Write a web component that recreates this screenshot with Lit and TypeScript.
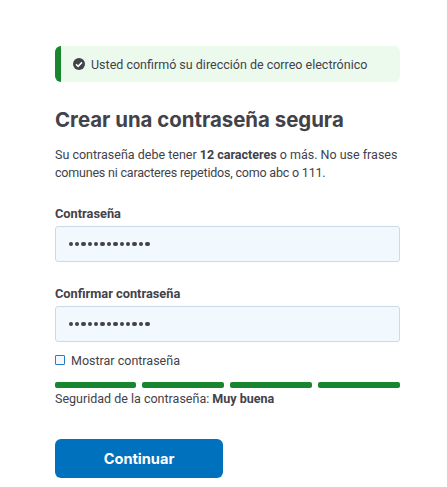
import { LitElement, html, css } from "lit";
import { customElement } from "lit/decorators.js";

@customElement("app-root")
export class AppRoot extends LitElement {
  static styles = css`
    :host { display: block; width: 447px; height: 487px; background: #fff; font-family: "Roboto", "Liberation Sans", sans-serif; color: #424249; font-size: 14px; box-sizing: border-box; overflow: hidden; }
    .wrap { padding: 46px 47px 0 55px; display: flex; flex-direction: column; }
    .alert { height: 36px; box-sizing: border-box; background: #ecfaee; border-left: 6px solid #18852f; border-radius: 6px; display: flex; align-items: center; padding-left: 12px; gap: 6px; font-size: 12.5px; }
    .alert svg { width: 12px; height: 12px; flex: none; }
    h1 { margin: 26px 0 0; font-family: "Inter", sans-serif; font-size: 20.4px; line-height: 24px; font-weight: 700; color: #424249; }
    p { margin: 14px 0 0; font-size: 12.5px; line-height: 18px; }
    .tight { letter-spacing: -0.2px; }
    b { font-weight: 700; }
    label.l { display: block; font-weight: 700; font-size: 12.8px; line-height: 16px; }
    .first { margin-top: 24px; }
    .second { margin-top: 24px; }
    .input { margin-top: 4px; height: 36px; box-sizing: border-box; background: #f1f8fe; border: 1px solid #ccd9ec; border-radius: 3px; display: flex; align-items: center; padding-left: 12.5px; }
    .dots { display: flex; gap: 2px; }
    .dots i { display: block; width: 4.4px; height: 4.4px; border-radius: 50%; background: #424249; }
    .check { display: flex; align-items: center; gap: 6px; margin-top: 10px; font-size: 12.5px; line-height: 18px; }
    .box { width: 8px; height: 8px; margin-bottom: 2px; border: 1px solid #2b7bbf; border-radius: 1px; background: #f1f8fe; }
    .bars { display: grid; grid-template-columns: 81px 82px 82px 82px; gap: 6px; margin-top: 12px; }
    .bars span { height: 6px; background: #18852f; border-radius: 2px; }
    .strength { margin-top: 2px; font-size: 12.5px; line-height: 18px; }
    button { all: unset; box-sizing: border-box; margin-top: 31px; width: 168px; height: 39px; background: #0071bc; color: #fff; font-family: "Inter", sans-serif; font-weight: 700; font-size: 14.6px; border-radius: 6px; display: flex; align-items: center; justify-content: center; }
  `;
  dots() {
    return html`<div class="dots">${Array.from({ length: 13 }, () => html`<i></i>`)}</div>`;
  }
  render() {
    return html`<div class="wrap">
      <div class="alert">
        <svg viewBox="0 0 24 24"><circle cx="12" cy="12" r="12" fill="#424249"/><path d="M6 12.5l4.2 4.2L18 8.8" fill="none" stroke="#fff" stroke-width="3"/></svg>
        <span>Usted confirmó su dirección de correo electrónico</span>
      </div>
      <h1>Crear una contraseña segura</h1>
      <p>Su contraseña debe tener <b>12 caracteres</b> o más. No use frases <span class="tight">comunes ni caracteres repetidos, como abc o 111.</span></p>
      <label class="l first">Contraseña</label>
      <div class="input">${this.dots()}</div>
      <label class="l second">Confirmar contraseña</label>
      <div class="input">${this.dots()}</div>
      <div class="check"><span class="box"></span><span>Mostrar contraseña</span></div>
      <div class="bars"><span></span><span></span><span></span><span></span></div>
      <div class="strength">Seguridad de la contraseña: <b>Muy buena</b></div>
      <button>Continuar</button>
    </div>`;
  }
}
